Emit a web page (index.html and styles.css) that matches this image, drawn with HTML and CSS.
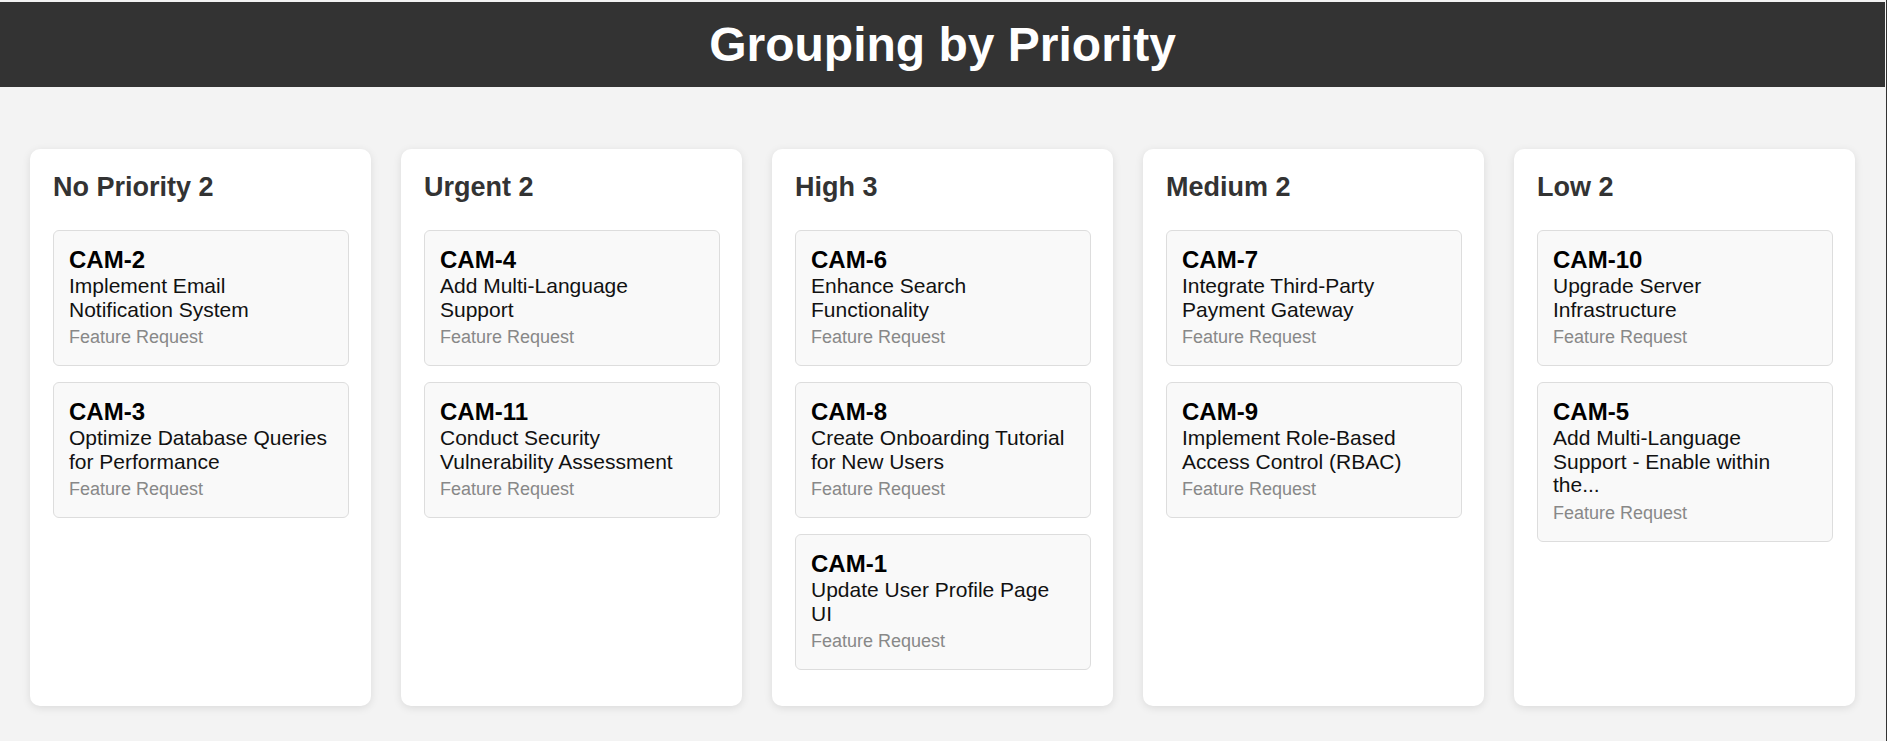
FILE: index.html
```html
<!DOCTYPE html>
<html lang="en">
<head>
<meta charset="utf-8">
<title>Grouping by Priority</title>
<link rel="stylesheet" href="styles.css">
</head>
<body>
  <header class="top-bar">
    <h1 class="page-title">Grouping by Priority</h1>
  </header>
  <main class="board">
    <section class="column">
      <h2 class="column-title">No Priority 2</h2>
      <div class="card-list">
        <div class="card">
          <div class="card-id">CAM-2</div>
          <div class="card-title">Implement Email Notification System</div>
          <div class="card-type">Feature Request</div>
        </div>
        <div class="card">
          <div class="card-id">CAM-3</div>
          <div class="card-title">Optimize Database Queries for Performance</div>
          <div class="card-type">Feature Request</div>
        </div>
      </div>
    </section>
    <section class="column">
      <h2 class="column-title">Urgent 2</h2>
      <div class="card-list">
        <div class="card">
          <div class="card-id">CAM-4</div>
          <div class="card-title">Add Multi-Language Support</div>
          <div class="card-type">Feature Request</div>
        </div>
        <div class="card">
          <div class="card-id">CAM-11</div>
          <div class="card-title">Conduct Security Vulnerability Assessment</div>
          <div class="card-type">Feature Request</div>
        </div>
      </div>
    </section>
    <section class="column">
      <h2 class="column-title">High 3</h2>
      <div class="card-list">
        <div class="card">
          <div class="card-id">CAM-6</div>
          <div class="card-title">Enhance Search Functionality</div>
          <div class="card-type">Feature Request</div>
        </div>
        <div class="card">
          <div class="card-id">CAM-8</div>
          <div class="card-title">Create Onboarding Tutorial for New Users</div>
          <div class="card-type">Feature Request</div>
        </div>
        <div class="card">
          <div class="card-id">CAM-1</div>
          <div class="card-title">Update User Profile Page UI</div>
          <div class="card-type">Feature Request</div>
        </div>
      </div>
    </section>
    <section class="column">
      <h2 class="column-title">Medium 2</h2>
      <div class="card-list">
        <div class="card">
          <div class="card-id">CAM-7</div>
          <div class="card-title">Integrate Third-Party Payment Gateway</div>
          <div class="card-type">Feature Request</div>
        </div>
        <div class="card">
          <div class="card-id">CAM-9</div>
          <div class="card-title">Implement Role-Based Access Control (RBAC)</div>
          <div class="card-type">Feature Request</div>
        </div>
      </div>
    </section>
    <section class="column">
      <h2 class="column-title">Low 2</h2>
      <div class="card-list">
        <div class="card">
          <div class="card-id">CAM-10</div>
          <div class="card-title">Upgrade Server Infrastructure</div>
          <div class="card-type">Feature Request</div>
        </div>
        <div class="card">
          <div class="card-id">CAM-5</div>
          <div class="card-title">Add Multi-Language Support - Enable within the...</div>
          <div class="card-type">Feature Request</div>
        </div>
      </div>
    </section>
  </main>
</body>
</html>
```

FILE: styles.css
```css
html {
  background: #f3f3f3;
}

body {
  margin: 0;
  padding: 2px 1px 0 0;
  min-height: 100vh;
  box-sizing: border-box;
  border-right: 1px solid #333;
  background: #f3f3f3;
  font-family: "Liberation Sans", Arial, sans-serif;
  color: #111;
}

.top-bar {
  background: #333;
  padding: 15px 0;
}

.page-title {
  margin: 0;
  color: #fff;
  text-align: center;
  font-size: 48px;
  line-height: 55px;
  font-weight: bold;
}

.board {
  display: flex;
  gap: 30px;
  padding: 62px 30px 0 30px;
  align-items: stretch;
}

.column {
  flex: 1 1 0;
  min-width: 0;
  background: #fff;
  border-radius: 10px;
  box-shadow: 0 2px 8px rgba(0, 0, 0, 0.1);
  padding: 23px 22px 36px 23px;
}

.column-title {
  margin: 0 0 28px 0;
  font-size: 27px;
  line-height: 30px;
  font-weight: bold;
  color: #333;
}

.card-list {
  display: flex;
  flex-direction: column;
  gap: 16px;
}

.card {
  background: #f9f9f9;
  border: 1px solid #ddd;
  border-radius: 6px;
  padding: 15px 17px 17px 15px;
}

.card-id {
  font-size: 24px;
  line-height: 28px;
  font-weight: bold;
  color: #000;
}

.card-title {
  font-size: 21px;
  line-height: 23.5px;
  color: #111;
}

.card-type {
  margin-top: 6px;
  font-size: 18px;
  line-height: 21px;
  color: #888;
}
```
